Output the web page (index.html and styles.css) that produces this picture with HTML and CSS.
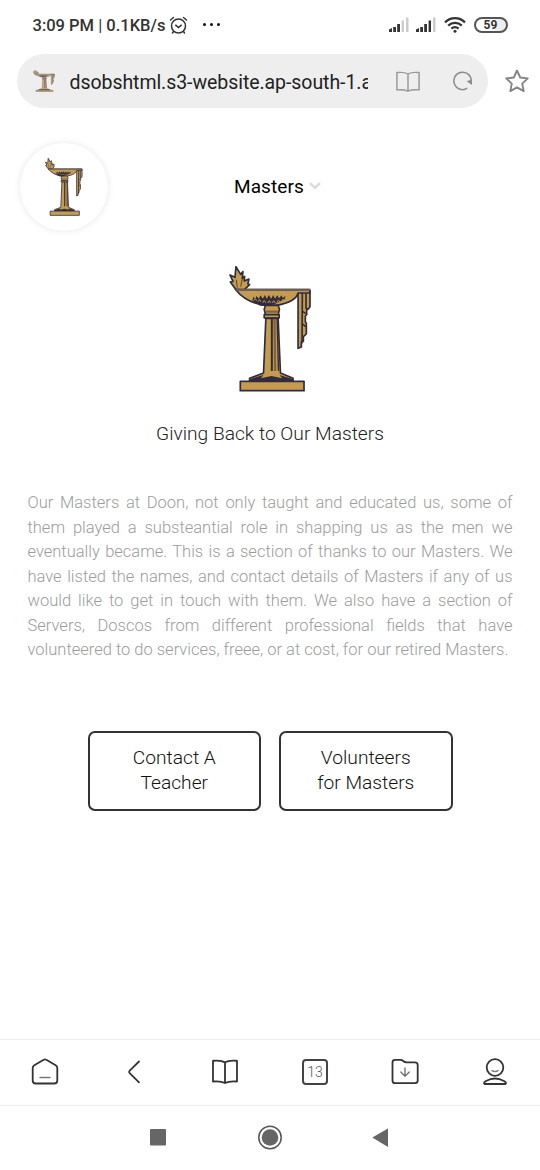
FILE: index.html
```html
<!DOCTYPE html>
<html lang="en">
<head>
<meta charset="utf-8">
<title>Masters</title>
<link rel="stylesheet" href="styles.css">
</head>
<body>
<svg class="defs" width="0" height="0">
  <symbol id="lamp" viewBox="42 34 250 378" preserveAspectRatio="none">
    <g stroke="#302c3c" stroke-width="5" stroke-linejoin="round" fill="#c49b50">
      <path d="M62 104 46 82l8-2-9-19 15 7 3-32 14 23 7-8-2 20 7-6-1 14 14-6-3 14 5 3-18 17Z"/>
      <path d="M250 108h36v48l-6 8-4-2v18l-4 4v18l3 4v32l-9 8v14l-6 2v15l-10 4Z"/>
      <path fill="none" d="m263 112-1 154M274 116v46M264 170l9 7M264 208l9 8"/>
      <path d="M62 105h223v10H250c-5 19-25 30-64 37h-36c-35-5-67-21-88-47Z"/>
      <path d="M152 152h38l4 12-4 17h-38l-4-17Z"/>
      <path d="M148 180h45v10h-45Z"/>
      <path d="M153 191h37l7 164 38 16v8H104v-8l42-16Z"/>
      <path d="M76 380h192v28H76Z"/>
    </g>
    <path fill="#69605c" d="M62 102h224v7H62Z"/>
    <path fill="#302c3c" d="M112 138l4-12 5 7 4-9 7 8 5-10 7 10 6-11 6 11 6-11 7 11 6-11 6 11 6-10 6 9 7-9 4 8 8-7-2 11-30 14-20 5h-24ZM168 191h6v158h-6ZM185 191h4l4 157h-4ZM106 373l40-12-8 10 32-7 32 7-8-10 40 12v7H106Z"/>
    <path fill="none" stroke="#c49b50" stroke-width="3" d="M117 138q4-11 8 0m5 3q4-12 8 0m6 3q4-13 8 0m7 1q4-14 8 0m6 0q4-14 8 0m6-2q4-13 8 0m6-3q4-12 8 0"/>
    <path fill="none" stroke="#80653c" stroke-width="7" d="M179 193l2 156M153 171h36"/>
    <path fill="none" stroke="#5b4430" stroke-width="3" d="m67 99-3-24M77 96l5-24"/>
  </symbol>
  <symbol id="signal" viewBox="0 0 20 15">
    <path fill="#333" d="M0 12.500 3 11v4H0ZM4.200 10h2.800v5H4.200ZM8.200 7H11v8H8.200Z"/>
  </symbol>
  <symbol id="book" viewBox="0 0 28 28">
    <path fill="none" stroke="currentColor" stroke-linejoin="round" d="M14 4.500C10.500 2 6 2.500 2 2.800v20.700c4-.3 8-.6 12 1.500 4-2.100 8-1.800 12-1.500V2.800c-4-.3-8.500-.8-12 1.700Zm0 0V25"/>
  </symbol>
</svg>

<div class="screen">
  <header class="status">
    <span class="clock">3:09 PM <i>|</i> 0.1KB/s</span>
    <svg class="alarm" width="19" height="19" viewBox="0 0 19 19" fill="none" stroke="#333" stroke-width="1.500" stroke-linecap="round"><circle cx="9.500" cy="10" r="7"/><path d="m1.500 4 3-2.500M17.500 4l-3-2.500M6.700 9.200l2.800 2.300 2.800-2.300M4.500 15.500 3.500 17M14.500 15.500l1 1.500"/></svg>
    <span class="dots"><b></b><b></b><b></b></span>
    <span class="indicators">
      <svg width="20" height="15" viewBox="0 0 20 15"><use href="#signal"/><path fill="#ccc" d="M12.600 3.500H15V15h-2.400ZM17 .5h2.500V15H17Z"/></svg>
      <svg width="20" height="15" viewBox="0 0 20 15"><use href="#signal"/><path fill="#333" d="M12.600 3.500H15V15h-2.400Z"/><path fill="#ccc" d="M17 .5h2.500V15H17Z"/></svg>
      <svg class="wifi" width="22" height="16" viewBox="0 0 22 16" fill="none" stroke="#333" stroke-width="2.300"><path d="M1 5.300c6-5.500 14-5.500 20 0M4.200 8.600c4-3.700 9.600-3.700 13.600 0M7.400 11.700c2.200-1.900 5-1.900 7.200 0"/><circle cx="11" cy="14.200" r="1.500" fill="#333" stroke="none"/></svg>
      <span class="battery">59</span>
    </span>
  </header>

  <div class="address">
    <div class="pill">
      <svg class="favicon" width="22" height="22"><use href="#lamp"/></svg>
      <span class="url">dsobshtml.s3-website.ap-south-1.a</span>
      <svg class="read" width="24" height="21" viewBox="1 1 26 25" preserveAspectRatio="none"><use href="#book" width="28" height="28"/></svg>
      <svg class="reload" width="22" height="22" viewBox="0 0 22 22"><path fill="none" stroke="#8c8c8c" stroke-width="1.500" d="M15.300 18.200A8.700 8.700 0 1 1 19.200 10"/><path fill="#8c8c8c" d="M14.500 11.200 20 9.500v5.500Z"/></svg>
    </div>
    <svg class="star" width="26" height="26" viewBox="0 0 26 26"><path fill="none" stroke="#858585" stroke-width="1.900" stroke-linejoin="round" d="m13 2.500 3.200 7 7.600.9-5.600 5.200 1.500 7.500L13 19.400l-6.700 3.700 1.500-7.500-5.600-5.200 7.600-.9Z"/></svg>
  </div>

  <main class="page">
    <div class="topnav">
      <div class="logo"><svg width="38" height="58"><use href="#lamp"/></svg></div>
      <div class="menu">Masters <svg width="12" height="8" viewBox="0 0 12 8"><path fill="none" stroke="#dcdcdc" stroke-width="2.500" d="m1 1.200 5 4.600 5-4.600"/></svg></div>
    </div>
    <svg class="hero" width="83" height="126"><use href="#lamp"/></svg>
    <h1 class="title">Giving Back to Our Masters</h1>
    <p class="intro">Our Masters at Doon, not only taught and educated us, some of them played a substeantial role in shapping us as the men we eventually became. This is a section of thanks to our Masters. We have listed the names, and contact details of Masters if any of us would like to get in touch with them. We also have a section of Servers, Doscos from different professional fields that have volunteered to do services, freee, or at cost, for our retired Masters.</p>
    <div class="actions">
      <button class="action">Contact A<br>Teacher</button>
      <button class="action">Volunteers<br>for Masters</button>
    </div>
  </main>

  <nav class="toolbar">
    <span><svg width="28" height="28" viewBox="0 0 28 28"><path d="M12.700 1.800Q14 1 15.300 1.800l9.400 5.400Q26.300 8.200 26.300 10v12.500q0 3-3 3H4.700q-3 0-3-3V10q0-1.800 1.600-2.800Z"/><path class="soft" d="M9 19.500h10"/></svg></span>
    <span><svg width="28" height="28" viewBox="0 0 28 28"><path d="M18 3.500 8.700 12.600q-1.200 1.300 0 2.600l9.300 9.100"/></svg></span>
    <span><svg class="bookmark" width="28" height="28" viewBox="0 0 28 28"><use href="#book"/></svg></span>
    <span><span class="tabs">13</span></span>
    <span><svg width="28" height="28" viewBox="0 0 28 28"><path d="M4 1.800h5.500q1.500 0 2.700 1.200 1.500 1.400 3.300 1.400h8.500q2.700 0 2.700 2.700V22.500q0 2.700-2.700 2.700H4q-2.500 0-2.500-2.700V4.300q0-2.500 2.500-2.500Z"/><path class="soft" d="M14 10v8.300M9.800 14l4.200 4.300 4.200-4.300"/></svg></span>
    <span><svg width="28" height="28" viewBox="0 0 28 28"><circle cx="14" cy="9.500" r="8.300"/><path d="M3.500 26q-1.500-1 1.500-3 9-5 18 0 3 2 1.500 3Z"/><path class="soft" d="M11 12.700q3 1.800 6 0"/></svg></span>
  </nav>
  <footer class="system">
    <svg width="110" height="26" viewBox="0 0 110 26"><rect x="45" y="5" width="16" height="16.500" rx="1" fill="#666"/></svg>
    <svg width="110" height="26" viewBox="0 0 110 26"><circle cx="55" cy="13.500" r="11.200" fill="none" stroke="#555" stroke-width="1.500"/><circle cx="55" cy="13.500" r="8.300" fill="#666"/></svg>
    <svg width="110" height="26" viewBox="0 0 110 26"><path fill="#666" d="M63 4.500v18.500L47.300 13.500Z"/></svg>
  </footer>
</div>
</body>
</html>
```

FILE: styles.css
```css
* { box-sizing: border-box; }
body { margin: 0; background: #fff; font-family: Roboto, "Liberation Sans", sans-serif; color: #000; }
svg { display: block; flex: none; }
.defs { position: absolute; }
.screen { width: 540px; height: 1170px; display: flex; flex-direction: column; overflow: hidden; }

.status { height: 54px; display: flex; align-items: center; padding: 0 32px 4px 32.5px; }
.clock { font-size: 16.5px; font-weight: 500; color: #333; white-space: nowrap; width: 136.5px; }
.clock i { font-style: normal; font-weight: 400; }
.alarm { width: 19px; }
.dots { display: flex; gap: 4px; margin-left: 15px; padding-bottom: 2px; }
.dots b { width: 3px; height: 3px; border-radius: 50%; background: #111; }
.indicators { margin-left: auto; display: flex; align-items: center; gap: 7px; padding-bottom: 1px; }
.wifi { margin-left: 1px; }
.battery { width: 34px; height: 16px; border: 2px solid #555; border-radius: 8px; background: linear-gradient(90deg, #fff 62%, #eee 62%); font-size: 12px; font-weight: 700; line-height: 12px; text-align: center; color: #333; margin-left: 1px; padding-right: 1px; }

.address { height: 54px; display: flex; padding-left: 17px; align-items: center; }
.pill { width: 471px; height: 54px; border-radius: 27px; background: #eee; display: flex; align-items: center; padding-left: 16px; }
.favicon { opacity: .8; }
.url { margin-left: 14.5px; width: 298px; flex: none; overflow: hidden; white-space: nowrap; font-size: 19.5px; line-height: 28px; letter-spacing: -.06px; color: #222; padding-top: 3px; }
.read { margin-left: 28px; color: #999; stroke-width: 1.6; }
.reload { margin-left: 32px; }
.star { margin-left: 15.5px; }

.page { flex: 1; display: flex; flex-direction: column; align-items: center; }
.topnav { width: 100%; margin-top: 35px; height: 88px; padding-left: 20px; display: flex; align-items: center; }
.logo { width: 88px; height: 88px; border-radius: 50%; box-shadow: 0 0 7px rgba(0, 0, 0, .1); display: flex; align-items: center; justify-content: center; }
.menu { margin-left: 126px; display: flex; align-items: center; gap: 5px; font-size: 19px; letter-spacing: .1px; padding-bottom: 2px; }
.hero { margin-top: 35px; }
.title { margin: 29px 0 0; font-size: 19.2px; line-height: 25px; font-weight: 300; color: #222; }
.intro { width: 485px; margin: 45.4px 0 0; font-size: 16.5px; line-height: 24.5px; font-weight: 300; text-align: justify; color: #9c9c9c; }
.actions { display: flex; gap: 18px; margin-top: 68.1px; }
.action { width: 173.5px; height: 80px; border: 2px solid #333; border-radius: 7px; background: #fff; font: 300 19.2px/24.5px Roboto, sans-serif; color: #111; padding: 0; }

.toolbar { height: 66px; border-top: 1px solid #eee; display: grid; grid-template-columns: repeat(6, 1fr); align-items: center; justify-items: center; padding-bottom: 2px; }
.toolbar svg { fill: none; stroke: #333; stroke-width: 1.8; stroke-linecap: round; stroke-linejoin: round; }
.toolbar .soft { stroke: #777; stroke-width: 1.4; }
.bookmark { color: #333; }
.tabs { display: block; width: 26px; height: 26px; border: 2px solid #444; border-radius: 4px; font-size: 14px; line-height: 22px; text-align: center; color: #555; font-weight: 300; }
.system { height: 65px; border-top: 1px solid #eee; display: flex; justify-content: center; padding-top: 18px; }
```
